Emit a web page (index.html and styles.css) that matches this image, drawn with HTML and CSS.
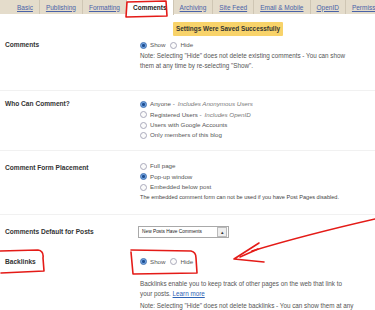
FILE: index.html
```html
<!DOCTYPE html>
<html lang="en">
<head>
    <meta charset="UTF-8">
    <meta name="viewport" content="width=device-width, initial-scale=1.0">
    <title>Settings - Comments</title>
    <link rel="stylesheet" href="styles.css">
</head>
<body>
    <div class="page">
        <div class="tabs">
            <a href="#" class="tab">Basic</a>
            <a href="#" class="tab">Publishing</a>
            <a href="#" class="tab">Formatting</a>
            <a href="#" class="tab active">Comments</a>
            <a href="#" class="tab">Archiving</a>
            <a href="#" class="tab">Site Feed</a>
            <a href="#" class="tab">Email &amp; Mobile</a>
            <a href="#" class="tab">OpenID</a>
            <a href="#" class="tab">Permissions</a>
        </div>

        <div class="notice">Settings Were Saved Successfully</div>

        <div class="row row-comments">
            <div class="label">Comments</div>
            <div class="control">
                <div class="inline-options">
                    <span class="radio on"></span> Show
                    <span class="radio"></span> Hide
                </div>
                <p class="note">Note: Selecting "Hide" does not delete existing comments - You can show them at any time by re-selecting "Show".</p>
            </div>
        </div>

        <div class="row row-who">
            <div class="label">Who Can Comment?</div>
            <div class="control">
                <div class="option"><span class="radio on"></span> Anyone - <em>Includes Anonymous Users</em></div>
                <div class="option"><span class="radio"></span> Registered Users - <em>Includes OpenID</em></div>
                <div class="option"><span class="radio"></span> Users with Google Accounts</div>
                <div class="option"><span class="radio"></span> Only members of this blog</div>
            </div>
        </div>

        <div class="row row-placement">
            <div class="label">Comment Form Placement</div>
            <div class="control">
                <div class="option"><span class="radio"></span> Full page</div>
                <div class="option"><span class="radio on"></span> Pop-up window</div>
                <div class="option"><span class="radio"></span> Embedded below post</div>
                <div class="option plain">The embedded comment form can not be used if you have Post Pages disabled.</div>
            </div>
        </div>

        <div class="row row-default">
            <div class="label">Comments Default for Posts</div>
            <div class="control">
                <div class="select">
                    <span class="select-text">New Posts Have Comments</span>
                    <span class="select-btn">&#9652;</span>
                </div>
            </div>
        </div>

        <div class="row row-backlinks">
            <div class="label">Backlinks</div>
            <div class="control">
                <div class="inline-options">
                    <span class="radio on"></span> Show
                    <span class="radio"></span> Hide
                </div>
                <p class="note">Backlinks enable you to keep track of other pages on the web that link to your posts. <a href="#" class="learn">Learn more</a></p>
                <p class="note">Note: Selecting "Hide" does not delete backlinks - You can show them at any time by re-selecting "Show".</p>
            </div>
        </div>

        <!-- red hand-drawn marks over the screenshot -->
        <svg class="marks" width="375" height="310" viewBox="0 0 375 310">
            <path d="M127 2 L166 1 L167 16 L126 17 Z" />
            <path d="M0 251 L38 250 Q44 251 43 258 L44 271 L1 273" />
            <path d="M131 250 L191 251 Q196 252 196 258 L197 273 L133 274 L131 252" />
            <path d="M375 219 C340 227 295 238 252 251" />
            <path d="M259 243 L234 259 L264 262" />
            <path d="M240 257 L258 249" />
        </svg>
    </div>
</body>
</html>
```

FILE: styles.css
```css
body {
    margin: 0;
    background-color: #fff;
    font-family: "Liberation Sans", Arial, sans-serif;
    color: #555;
}
.page {
    position: relative;
    width: 375px;
    height: 310px;
    overflow: hidden;
}

/* barra de pestañas */
.tabs {
    display: flex;
    height: 14px;
    background-color: #e4dccb;
    padding-left: 10px;
    white-space: nowrap;
}
.tab {
    display: flex;
    align-items: center;
    padding: 0 6px;
    font-size: 6.5px;
    color: #4a63a8;
    text-decoration: underline;
    border-right: 1px solid #cfc6b4;
}
.tab:first-child {
    padding-left: 7px;
}
.tab.active {
    background-color: #fff;
    color: #222;
    font-weight: bold;
    text-decoration: none;
    height: 15px;
}

.notice {
    margin: 8px 0 0 173px;
    width: 110px;
    height: 14px;
    line-height: 14px;
    background-color: #f8d36a;
    color: #333;
    font-size: 6.4px;
    font-weight: bold;
    text-align: center;
    border-radius: 1px;
}

/* filas de opciones */
.row {
    display: grid;
    grid-template-columns: 140px 1fr;
    border-bottom: 1px solid #f1f1f1;
}
.label {
    padding-left: 5px;
    font-size: 6.6px;
    font-weight: bold;
    color: #333;
    line-height: 10px;
}
.control {
    font-size: 6.2px;
    line-height: 10.3px;
}
.row-comments {
    padding: 4px 0 19px;
}
.row-who {
    padding: 8px 0 10px;
}
.row-placement {
    padding: 10px 0 11px;
}
.row-placement .label {
    padding-top: 2px;
}
.row-default {
    padding: 11px 0 12px;
    border-bottom: none;
}
.row-default .label {
    line-height: 12px;
}
.row-backlinks {
    padding: 7px 0 0;
    border-bottom: none;
}

.inline-options,
.option {
    display: flex;
    align-items: center;
    gap: 3px;
    height: 10.3px;
    white-space: nowrap;
}
.inline-options .radio:nth-of-type(2) {
    margin-left: 2px;
}
.option em {
    color: #777;
}
.option.plain {
    color: #444;
    font-size: 5.6px;
}

.radio {
    display: inline-block;
    width: 5px;
    height: 5px;
    border: 1px solid #aab;
    border-radius: 50%;
    background: #fbfbfb;
    flex-shrink: 0;
}
.radio.on {
    border-color: #3d6fb0;
    background: radial-gradient(circle at 50% 50%, #1f4f91 0, #1f4f91 1.2px, #6a9ee0 1.8px, #9bc2ef 100%);
}

.note {
    margin: 1px 0 0;
    width: 215px;
    line-height: 10px;
    font-size: 6.3px;
    color: #555;
}
.row-backlinks .note {
    margin-top: 12px;
}
.row-backlinks .note + .note {
    margin-top: 2px;
}
.learn {
    color: #2e63b5;
    text-decoration: underline;
}

.select {
    display: flex;
    align-items: center;
    width: 89px;
    height: 10px;
    border: 1px solid #a9a9a9;
    margin-left: -2px;
    background-color: #fff;
}
.select-text {
    flex: 1;
    padding-left: 3px;
    font-size: 4.8px;
    color: #222;
}
.select-btn {
    width: 8px;
    height: 8px;
    margin-right: 1px;
    border: 1px solid #bbb;
    font-size: 5px;
    line-height: 8px;
    text-align: center;
    color: #333;
    background-color: #eee;
}

/* marcas rojas a mano */
.marks {
    position: absolute;
    top: 0;
    left: 0;
    pointer-events: none;
}
.marks path {
    fill: none;
    stroke: #e41b17;
    stroke-width: 1.6;
    stroke-linecap: round;
    stroke-linejoin: round;
}
```
